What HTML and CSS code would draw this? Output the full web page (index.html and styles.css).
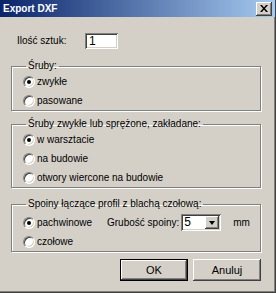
FILE: index.html
```html
<!DOCTYPE html>
<html lang="pl">
<head>
    <meta charset="UTF-8">
    <title>Export DXF</title>
    <link rel="stylesheet" href="styles.css">
</head>
<body>
<div class="window">
    <div class="titlebar">
        <span class="title">Export DXF</span>
        <span class="close">
            <svg width="8" height="7" viewBox="0 0 8 7"><path d="M0 0h2l2 2.5 2-2.5h2L5 3.5 8 7H6L4 4.5 2 7H0l3-3.5z" fill="#000"/></svg>
        </span>
    </div>
    <div class="content">
        <div class="qty">
            <span class="qty-label">Ilość sztuk:</span>
            <div class="field">1</div>
        </div>

        <fieldset class="group g1">
            <legend>Śruby:</legend>
            <div class="opt"><span class="radio on"></span>zwykłe</div>
            <div class="opt"><span class="radio"></span>pasowane</div>
        </fieldset>

        <fieldset class="group g2">
            <legend>Śruby zwykłe lub sprężone, zakładane:</legend>
            <div class="opt"><span class="radio on"></span>w warsztacie</div>
            <div class="opt"><span class="radio"></span>na budowie</div>
            <div class="opt"><span class="radio"></span>otwory wiercone na budowie</div>
        </fieldset>

        <fieldset class="group g3">
            <legend>Spoiny łączące profil z blachą czołową:</legend>
            <div class="opt">
                <span class="opt-main"><span class="radio on"></span>pachwinowe</span>
                <span class="weld-label">Grubość spoiny:</span>
                <div class="combo"><span class="combo-val">5</span><span class="combo-btn"><i class="arrow"></i></span></div>
                <span class="unit">mm</span>
            </div>
            <div class="opt"><span class="radio"></span>czołowe</div>
        </fieldset>

        <div class="buttons">
            <div class="btn default"><span>OK</span></div>
            <div class="btn"><span>Anuluj</span></div>
        </div>
    </div>
</div>
</body>
</html>
```

FILE: styles.css
```css
html,body{margin:0;padding:0;}
body{background:#d4d0c8;font:10px/12px "Liberation Sans",Arial,sans-serif;color:#000;}
.window{width:276px;height:293px;box-sizing:border-box;background:#d4d0c8;border-right:1px solid #404040;border-bottom:1px solid #404040;box-shadow:inset -1px -1px 0 #808080;display:flex;flex-direction:column;}
.titlebar{height:17px;display:flex;align-items:center;justify-content:space-between;padding:0 3px 0 3px;background:linear-gradient(to right,#0a246a,#a6caf0);}
.title{color:#fff;font-weight:bold;font-size:10px;}
.close{width:16px;height:14px;box-sizing:border-box;background:#d4d0c8;display:flex;align-items:center;justify-content:center;box-shadow:inset -1px -1px 0 #404040,inset 1px 1px 0 #fff,inset -2px -2px 0 #808080;}
.content{padding:16px 14px 0 11px;display:flex;flex-direction:column;}
.qty{display:flex;align-items:center;height:16px;padding-left:6px;}
.qty-label{width:68px;}
.field{width:33px;height:16px;box-sizing:border-box;background:#fff;padding:2px 0 0 4px;font-size:12px;line-height:13px;box-shadow:inset 1px 1px 0 #808080,inset -1px -1px 0 #fff,inset 2px 2px 0 #404040,inset -2px -2px 0 #d4d0c8;}
.group{margin:0;padding:0 0 0 11px;border:1px solid #808080;box-shadow:1px 1px 0 #fff,inset 1px 1px 0 #fff;min-width:0;}
.group legend{padding:0 2px;margin-left:3px;line-height:12px;}
.g1{margin-top:11px;}
.g2{margin-top:7px;}
.g3{margin-top:10px;padding-top:3px;}
.opt{display:flex;align-items:center;height:19px;white-space:nowrap;}
.opt > *{flex:none;}
.opt-main{display:flex;align-items:center;width:84px;}
.radio{width:12px;height:12px;box-sizing:border-box;border-radius:50%;background:#fff;border:1px solid;border-color:#808080 #fff #fff #808080;box-shadow:inset 1px 1px 0 #404040,inset -1px -1px 0 #d4d0c8;margin-right:2px;position:relative;flex:none;}
.radio.on::after{content:"";position:absolute;left:3px;top:3px;width:4px;height:4px;border-radius:50%;background:#000;}
.weld-label{margin-right:2px;}
.combo{width:40px;height:17px;box-sizing:border-box;background:#fff;display:flex;padding:2px;box-shadow:inset 1px 1px 0 #808080,inset -1px -1px 0 #fff,inset 2px 2px 0 #404040,inset -2px -2px 0 #d4d0c8;}
.combo-val{flex:1;font-size:12px;line-height:13px;padding-left:1px;}
.combo-btn{width:14px;background:#d4d0c8;display:flex;align-items:center;justify-content:center;box-shadow:inset -1px -1px 0 #404040,inset 1px 1px 0 #fff,inset -2px -2px 0 #808080;}
.arrow{width:0;height:0;border-left:3.5px solid transparent;border-right:3.5px solid transparent;border-top:4px solid #000;}
.unit{margin-left:12px;}
.buttons{display:flex;justify-content:flex-end;gap:5px;margin-top:7px;}
.btn{width:68px;height:22px;box-sizing:border-box;display:flex;align-items:center;justify-content:center;font-size:11px;box-shadow:inset -1px -1px 0 #404040,inset 1px 1px 0 #fff,inset -2px -2px 0 #808080;}
.btn.default{border:1px solid #000;}
```
